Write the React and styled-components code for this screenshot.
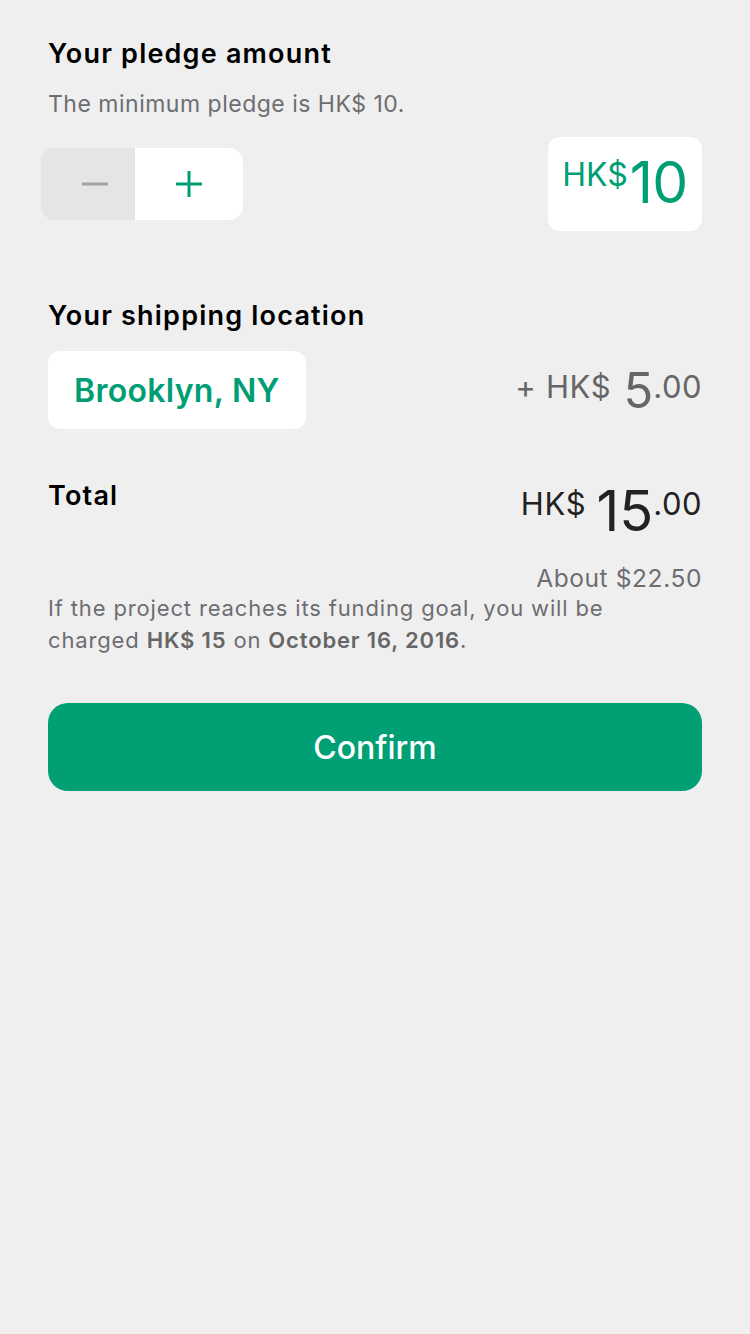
import styled, { createGlobalStyle } from "styled-components";

const GREEN = "#009e74";

const GlobalStyle = createGlobalStyle`
    html, body {
        margin: 0;
        padding: 0;
        background: #efefef;
        font-family: Inter, "Noto Sans", sans-serif;
        -webkit-font-smoothing: antialiased;
    }
`;

const Page = styled.div`
    min-height: 1334px;
    padding: 36px 48px 0;
    box-sizing: border-box;
    display: flex;
    flex-direction: column;
`;

const Heading = styled.h2`
    margin: 0;
    font-size: 27px;
    font-weight: 600;
    letter-spacing: 1.2px;
    color: #000;
    line-height: 36px;
`;

const Hint = styled.p`
    margin: 16px 0 0;
    font-size: 23px;
    letter-spacing: 0.5px;
    color: #6d6d72;
    line-height: 32px;
`;

const Row = styled.div`
    display: flex;
    justify-content: space-between;
    align-items: flex-start;
    margin-top: ${(p) => p.$top || 0}px;
`;

const Stepper = styled.div`
    display: flex;
    margin: 11px 0 0 -7px;
    border-radius: 14px;
    overflow: hidden;
    height: 72px;
`;

const StepButton = styled.button`
    border: 0;
    width: ${(p) => p.$width}px;
    background: ${(p) => (p.$muted ? "#e5e5e5" : "#fff")};
    color: ${(p) => (p.$muted ? "#a3a3a3" : GREEN)};
    display: flex;
    align-items: center;
    justify-content: center;
    padding: 0 0 0 ${(p) => (p.$muted ? 14 : 0)}px;
`;

const AmountBox = styled.div`
    background: #fff;
    border-radius: 12px;
    width: 154px;
    height: 94px;
    display: flex;
    justify-content: center;
    align-items: flex-start;
    padding: 17px 0 0 0;
    box-sizing: border-box;
    color: ${GREEN};
`;

const AmountCurrency = styled.span`
    font-size: 32px;
    line-height: 1;
    margin: 5px 2px 0 0;
`;

const AmountValue = styled.span`
    font-size: 57px;
    line-height: 1;
    letter-spacing: -0.5px;
`;

const Section = styled.section`
    margin-top: ${(p) => p.$top}px;
`;

const LocationButton = styled.button`
    border: 0;
    background: #fff;
    border-radius: 12px;
    height: 78px;
    padding: 0 26px;
    font-family: inherit;
    font-size: 32px;
    font-weight: 600;
    letter-spacing: 0.3px;
    color: ${GREEN};
`;

const Price = styled.div`
    display: flex;
    align-items: flex-start;
    color: ${(p) => p.$color};
    padding-top: ${(p) => p.$top}px;
`;

const PriceLabel = styled.span`
    font-size: 31px;
    line-height: 1;
    margin: 5px ${(p) => p.$gap}px 0 0;
    letter-spacing: 0.7px;
`;

const PriceBig = styled.span`
    font-size: ${(p) => p.$size}px;
    line-height: 1;
`;

const PriceCents = styled.span`
    font-size: 31px;
    line-height: 1;
    margin-top: 5px;
    letter-spacing: 0.5px;
`;

const About = styled.div`
    margin-top: 25px;
    text-align: right;
    font-size: 24.5px;
    letter-spacing: 0.6px;
    line-height: 28px;
    color: #6d6d72;
`;

const Note = styled.p`
    margin: 0;
    font-size: 22px;
    letter-spacing: 0.85px;
    line-height: 32px;
    color: #6d6d72;

    strong {
        font-weight: 600;
        color: #666;
    }
`;

const ConfirmButton = styled.button`
    margin-top: 47px;
    border: 0;
    border-radius: 20px;
    height: 88px;
    width: 100%;
    background: #00a074;
    color: #fff;
    font-family: inherit;
    font-size: 32px;
    font-weight: 500;
`;

function Minus() {
    return (
        <svg width="26" height="26" viewBox="0 0 26 26">
            <path d="M0 13h26" stroke="currentColor" strokeWidth="3" />
        </svg>
    );
}

function Plus() {
    return (
        <svg width="26" height="26" viewBox="0 0 26 26">
            <path d="M0 13h26M13 0v26" stroke="currentColor" strokeWidth="3" />
        </svg>
    );
}

export default function App() {
    return (
        <>
            <GlobalStyle />
            <Page>
                <Heading>Your pledge amount</Heading>
                <Hint>The minimum pledge is HK$ 10.</Hint>
                <Row $top={17}>
                    <Stepper>
                        <StepButton $muted $width={94} aria-label="Decrease">
                            <Minus />
                        </StepButton>
                        <StepButton $width={108} aria-label="Increase">
                            <Plus />
                        </StepButton>
                    </Stepper>
                    <AmountBox>
                        <AmountCurrency>HK$</AmountCurrency>
                        <AmountValue>10</AmountValue>
                    </AmountBox>
                </Row>

                <Section $top={67}>
                    <Heading>Your shipping location</Heading>
                    <Row $top={17}>
                        <LocationButton>Brooklyn, NY</LocationButton>
                        <Price $color="#666" $top={15}>
                            <PriceLabel $gap={12}>+ HK$</PriceLabel>
                            <PriceBig $size={49}>5</PriceBig>
                            <PriceCents>.00</PriceCents>
                        </Price>
                    </Row>
                </Section>

                <Section $top={49}>
                    <Row>
                        <Heading>Total</Heading>
                        <Price $color="#222" $top={5}>
                            <PriceLabel $gap={10}>HK$</PriceLabel>
                            <PriceBig $size={56}>15</PriceBig>
                            <PriceCents>.00</PriceCents>
                        </Price>
                    </Row>
                    <About>About $22.50</About>
                    <Note>
                        If the project reaches its funding goal, you will be
                        <br />
                        charged <strong>HK$ 15</strong> on{" "}
                        <strong>October 16, 2016</strong>.
                    </Note>
                </Section>

                <ConfirmButton>Confirm</ConfirmButton>
            </Page>
        </>
    );
}
